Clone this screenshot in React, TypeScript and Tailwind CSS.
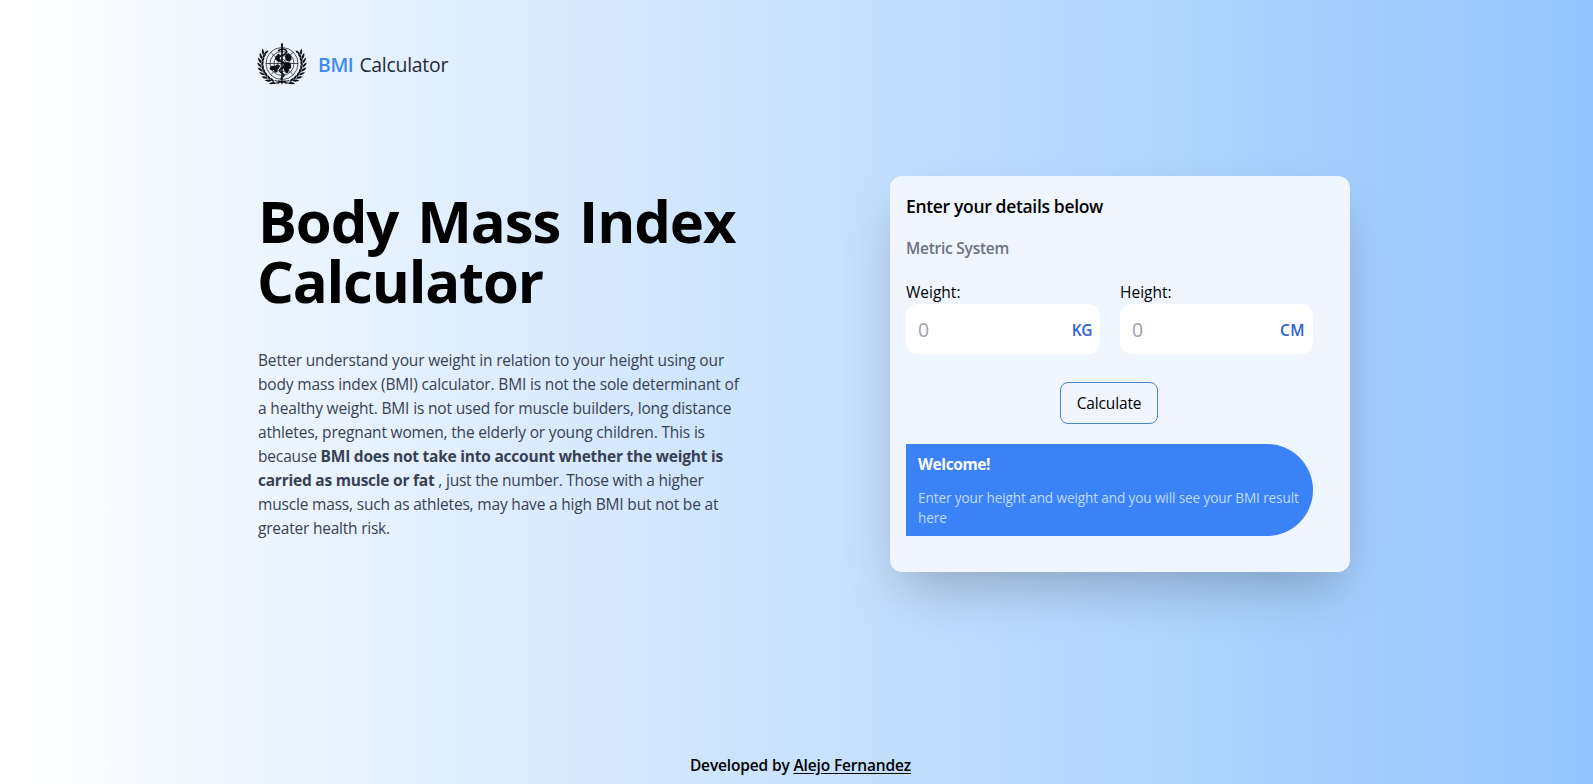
const INK = "#0a0e16";

function leafPath(angle: number, side: number) {
  const a = (angle * Math.PI) / 180;
  const radial = [Math.cos(a), Math.sin(a)];
  const tangent = [-Math.sin(a), Math.cos(a)];
  const root = [25 + 20.6 * radial[0], 20.6 + 19.8 * radial[1]];
  const lean = side > 0 ? 0.5 : 0.42;
  const length = side > 0 ? 7 : 6;
  const dir = [
    tangent[0] * Math.cos(lean) + side * radial[0] * Math.sin(lean),
    tangent[1] * Math.cos(lean) + side * radial[1] * Math.sin(lean),
  ];
  const normal = [-dir[1], dir[0]];
  const tip = [root[0] + dir[0] * length, root[1] + dir[1] * length];
  const at = (k: number) =>
    `${(root[0] + dir[0] * length * 0.5 + normal[0] * k).toFixed(2)} ${(root[1] + dir[1] * length * 0.5 + normal[1] * k).toFixed(2)}`;
  return `M${root[0].toFixed(2)} ${root[1].toFixed(2)}Q${at(2.1)} ${tip[0].toFixed(2)} ${tip[1].toFixed(2)}Q${at(-2.1)} ${root[0].toFixed(2)} ${root[1].toFixed(2)}Z`;
}

const angles = [108, 120, 132, 144, 156, 168, 180, 192, 204];

function Branch() {
  return (
    <g>
      {angles.map((a) => (
        <g key={a}>
          <path d={leafPath(a, 1)} />
          <path d={leafPath(a + 4, -1)} />
        </g>
      ))}
      <path d="M15.8 40.6C19.5 40.8 22.5 38.4 28.5 37.8M17.6 37.6C21.5 38.6 26.5 38.4 29.5 40.6" fill="none" stroke={INK} strokeWidth="1" />
    </g>
  );
}

function Emblem() {
  return (
    <svg viewBox="0 0 50 42" className="h-[42px] w-[50px] shrink-0" fill={INK} aria-hidden="true">
      <Branch />
      <g transform="translate(50 0) scale(-1 1)">
        <Branch />
      </g>
      <g fill="none" stroke={INK} strokeWidth="0.7">
        <circle cx="25" cy="20.5" r="16" />
        <circle cx="25" cy="20.5" r="12" />
        <circle cx="25" cy="20.5" r="8" />
        <circle cx="25" cy="20.5" r="4.2" />
        <path d="M9 20.5h32M13.7 9.2l22.6 22.6M36.3 9.2 13.7 31.8" />
      </g>
      <path d="M12.4 25.2l2.2-2.4 3.2.2 2.2-1.6 2.6 1.2-.4 2.6-1.8 1.4.2 2.6-2.6.2-1.6-2.4-2.4.4z" />
      <path d="M18.6 13.6l2.6-2.8 2 1-1.2 2.8 1.6 2.6-1.4 2-2.8-1.6-1.4-2z" />
      <path d="M28.4 11.4l3.2-.8 2.6 2.4.4 3.4-2.4 2-2.6-.6-1.4-2.2z" />
      <path d="M27.2 19.6l4-.6 2.8 2.4.2 3.6-2.2 1.2-.6 3.2-2.4 1-1.8-3.4-1.4-2.8z" />
      <path d="M24.1 1.2a.9 1.2 0 0 1 1.8 0l-.3 40h-1.2z" />
      <path
        d="M21.6 7.6c2-2.2 7.8-1.8 8 1.2.3 3.4-8.4 3.6-8.2 7.2.2 3.2 7.4 2.8 7.2 6.2-.2 3-6.2 2.8-6 5.6.1 2.2 4.6 2.2 4.4 4.4-.1 1.7-3 1.8-2.9 3.7"
        fill="none"
        stroke={INK}
        strokeWidth="1.6"
        strokeLinecap="round"
      />
    </svg>
  );
}

function Measure({ label, unit, unitClass }: { label: string; unit: string; unitClass: string }) {
  return (
    <label className="block text-[15.5px] leading-6 text-black">
      {label}
      <span className="flex h-[50px] items-center justify-between rounded-xl bg-white pt-0.5 pr-2 pl-3">
        <span className="text-[19.4px] leading-7 text-[#9ca3af]">0</span>
        <span className={unitClass}>{unit}</span>
      </span>
    </label>
  );
}

export default function App() {
  return (
    <div className="flex h-[784px] flex-col justify-between overflow-hidden bg-[linear-gradient(to_right,#ffffff,#93c5fd)] pb-[7px] font-['Open_Sans',sans-serif] text-black">
      <div className="ml-[257px] w-[1093px]">
        <header className="flex h-[128px] items-center gap-[11px]">
          <Emblem />
          <p className="flex gap-[6px] pt-px text-[19.4px] leading-7 whitespace-nowrap">
            <span className="font-semibold tracking-[-0.4px] text-[#3f8aee]">BMI</span>
            <span className="tracking-[-0.25px] text-[#1f2937]">Calculator</span>
          </p>
        </header>

        <main className="flex items-start justify-between pt-12">
          <section className="pt-[15px]">
            <h1 className="ml-px text-[58px] leading-[60px] font-bold whitespace-nowrap">
              <span className="block tracking-[-1.1px] [word-spacing:5px]">Body Mass Index</span>
              <span className="-ml-px block tracking-[-1.2px]">Calculator</span>
            </h1>
            <p className="mt-[37px] ml-px text-[15.5px] leading-6 tracking-[-0.16px] whitespace-nowrap text-[#374151]">
              Better understand your weight in relation to your height using our
              <br />
              body mass index (BMI) calculator. BMI is not the sole determinant of
              <br />
              a healthy weight. BMI is not used for muscle builders, long distance
              <br />
              <span className="tracking-[-0.18px]">athletes, pregnant women, the elderly or young children. This is</span>
              <br />
              because{" "}
              <strong className="font-bold tracking-[-0.23px]">
                BMI does not take into account whether the weight is
                <br />
                carried as muscle or fat
              </strong>{" "}
              <span className="tracking-[-0.22px]">, just the number. Those with a higher</span>
              <br />
              <span className="tracking-[-0.18px]">muscle mass, such as athletes, may have a high BMI but not be at</span>
              <br />
              <span className="tracking-[-0.22px]">greater health risk.</span>
            </p>
          </section>

          <section className="h-[396px] w-[460px] rounded-xl bg-[#eff6ff] pt-4 pr-[37px] pl-4 shadow-2xl">
            <h2 className="text-[17.5px] leading-7 font-semibold tracking-[-0.33px]">Enter your details below</h2>
            <h3 className="mt-4 text-[15.5px] leading-6 font-semibold tracking-[-0.25px] text-[#6b7280]">
              Metric System
            </h3>
            <div className="mt-5 grid grid-cols-[194px_193px] gap-5">
              <Measure label="Weight:" unit="KG" unitClass="font-semibold tracking-[-0.4px] text-[#2f62d0]" />
              <Measure label="Height:" unit="CM" unitClass="font-semibold tracking-[0.4px] text-[#2f62d0]" />
            </div>
            <div className="mt-7 flex justify-center pr-px">
              <button className="h-[42px] w-[98px] rounded-lg border border-[#4a86c5] text-[15.5px] leading-6 tracking-[-0.15px]">
                Calculate
              </button>
            </div>
            <div className="mt-5 h-[92px] rounded-r-full bg-[#3b82f6] px-3 py-2 whitespace-nowrap">
              <p className="text-[15.5px] leading-6 font-bold tracking-[-0.4px] text-white">Welcome!</p>
              <p className="mt-3 text-[13.6px] leading-5 tracking-[-0.12px] text-[#bfdbfe]">
                Enter your height and weight and you will see your BMI result
                <br />
                here
              </p>
            </div>
          </section>
        </main>
      </div>

      <footer className="pl-[8px] text-center text-[15.5px] leading-6 font-semibold tracking-[-0.15px]">
        Developed by <a className="underline underline-offset-2">Alejo Fernandez</a>
      </footer>
    </div>
  );
}
